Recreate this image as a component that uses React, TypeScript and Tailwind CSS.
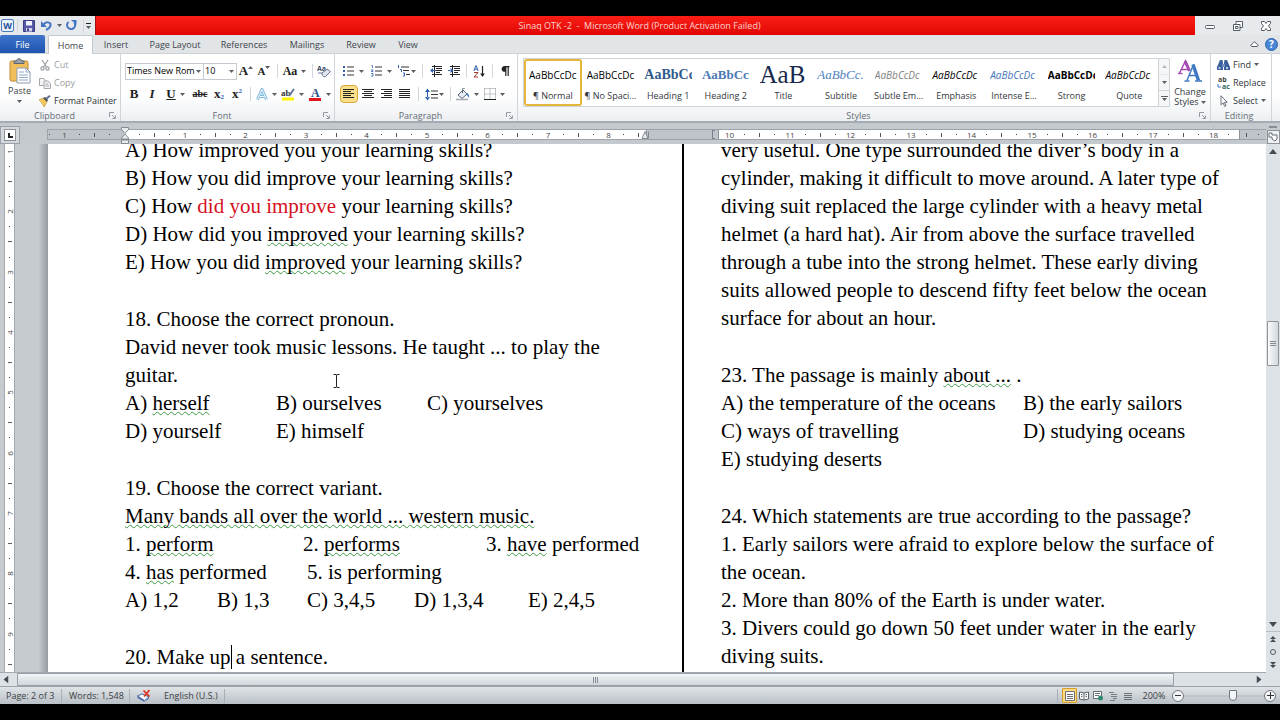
import { useState } from "react";
import type { ReactNode } from "react";
import clsx from "clsx";

const TABS = [
  { name: "Home", width: "w-[45px]" },
  { name: "Insert", width: "w-[46px]" },
  { name: "Page Layout", width: "w-[72px]" },
  { name: "References", width: "w-[66px]" },
  { name: "Mailings", width: "w-[60px]" },
  { name: "Review", width: "w-[48px]" },
  { name: "View", width: "w-[46px]" },
];

const STYLES = [
  { name: "¶ Normal", sample: "AaBbCcDc", look: "text-[10px] text-black" },
  { name: "¶ No Spaci...", sample: "AaBbCcDc", look: "text-[10px] text-black" },
  { name: "Heading 1", sample: "AaBbCc", look: "font-['Liberation_Serif',serif] text-[14px] font-bold text-[#2f5a8c]" },
  { name: "Heading 2", sample: "AaBbCc", look: "font-['Liberation_Serif',serif] text-[13px] font-bold text-[#4a7ab5]" },
  { name: "Title", sample: "AaB", look: "font-['Liberation_Serif',serif] text-[25px] text-[#17294d]" },
  { name: "Subtitle", sample: "AaBbCc.", look: "font-['Liberation_Serif',serif] text-[13px] italic text-[#4f81bd]" },
  { name: "Subtle Em...", sample: "AaBbCcDc", look: "text-[10px] italic text-[#808080]" },
  { name: "Emphasis", sample: "AaBbCcDc", look: "text-[10px] italic text-black" },
  { name: "Intense E...", sample: "AaBbCcDc", look: "text-[10px] italic text-[#3f74b8]" },
  { name: "Strong", sample: "AaBbCcDc", look: "text-[10px] font-bold text-black" },
  { name: "Quote", sample: "AaBbCcDc", look: "text-[10px] italic text-black" },
];

function Caret() {
  return (
    <svg viewBox="0 0 5 3" className="h-[3px] w-[5px] shrink-0">
      <path d="M0 0h5L2.500 3z" fill="#5a5f66" />
    </svg>
  );
}

function Sep({ className }: { className: string }) {
  return (
    <span className={clsx("flex h-[14px] shrink-0 justify-center", className)}>
      <span className="w-px bg-[#d3d7db]" />
    </span>
  );
}

function Tool({ label, className, caret, children }: { label: string; className: string; caret?: boolean; children: ReactNode }) {
  return (
    <button
      aria-label={label}
      className={clsx("flex h-[18px] shrink-0 items-center justify-center rounded-sm text-[#222] hover:bg-[#fdeeb3]", caret && "gap-[4px]", className)}
    >
      {children}
      {caret && <Caret />}
    </button>
  );
}

function Group({ name, launcher, className, children }: { name: string; launcher?: boolean; className: string; children: ReactNode }) {
  return (
    <section aria-label={name} className={clsx("flex flex-col border-r border-[#d0d5da]", className)}>
      <div className="flex min-h-0 flex-1">{children}</div>
      <div className="flex h-[11px] items-center pr-[4px] text-[#666c75]">
        <span className="flex-1 text-center">{name}</span>
        {launcher && (
          <button aria-label={`${name} options`}>
            <svg viewBox="0 0 7 7" className="h-[7px] w-[7px]" fill="none" stroke="#8a9098" strokeWidth="0.9">
              <path d="M.5 5V.5H5M3 3l3 3M6.400 3.500v3h-3" />
            </svg>
          </button>
        )}
      </div>
    </section>
  );
}

function Lines({ rows, className }: { rows: [number, number][]; className?: string }) {
  return (
    <svg viewBox="0 0 12 12" className={clsx("h-[12px] w-[12px]", className)} stroke="#222" strokeWidth="1">
      {rows.map(([from, to], i) => (
        <path key={i} d={`M${from} ${i * 2 + 1.5}H${to}`} />
      ))}
    </svg>
  );
}

/* ---------- ribbon groups ---------- */

function Clipboard() {
  return (
    <Group name="Clipboard" launcher className="w-[121px]">
      <button className="flex w-[39px] flex-col items-center justify-start pt-[4px] text-[#3b3f45]">
        <svg viewBox="0 0 24 26" className="h-[26px] w-[24px] shrink-0">
          <rect x="2" y="3" width="18" height="20" rx="1.500" fill="#f0bf5c" stroke="#c08b2c" />
          <path d="M6 5.500V3h2.500c0-3 5-3 5 0H16v2.500z" fill="#9aa2ab" stroke="#5d646c" />
          <path d="M9 10h9l4 4v11H9z" fill="#fff" stroke="#8c9bb0" />
          <path d="M18 10v4h4M11 14h5M11 17h9M11 19.500h9M11 22h9" stroke="#91a8c6" fill="none" />
        </svg>
        <span className="leading-[14px]">Paste</span>
        <span className="pt-[2px]"><Caret /></span>
      </button>
      <div className="flex flex-col gap-[1px] pt-[2px]">
        <button className="flex h-[17px] items-center gap-[3px] text-[#9a9da1]">
          <svg viewBox="0 0 12 12" className="h-[12px] w-[12px]" fill="none" stroke="#9a9da1" strokeWidth="1.200">
            <path d="M3 1l4.500 7M9 1L4.500 8" />
            <circle cx="3.500" cy="9.500" r="1.600" />
            <circle cx="8.500" cy="9.500" r="1.600" />
          </svg>
          Cut
        </button>
        <button className="flex h-[17px] items-center gap-[3px] text-[#9a9da1]">
          <svg viewBox="0 0 12 12" className="h-[12px] w-[12px]" fill="#f5f5f5" stroke="#a3a6aa">
            <path d="M.5 1.500h4l2 2v5h-6z" />
            <path d="M5 4h4l2.500 2.500v5H5zM6.500 7h3M6.500 9h3.500" />
          </svg>
          Copy
        </button>
        <button className="flex h-[17px] items-center gap-[3px] text-[#2b2f35]">
          <svg viewBox="0 0 12 12" className="h-[12px] w-[12px]">
            <path d="M0 5l4-2 4 4-3 5C4 9 2 7 0 5z" fill="#f3c95e" stroke="#b98e2d" strokeWidth=".6" />
            <path d="M4 3l2-1 3 3-1 2z" fill="#474d55" />
            <path d="M7.500 3.500L11 .8" stroke="#5a6f95" strokeWidth="2" />
          </svg>
          Format Painter
        </button>
      </div>
    </Group>
  );
}

function FontGroup() {
  return (
    <Group name="Font" launcher className="w-[214px]">
      <div className="flex flex-col gap-[5px] pt-[8px] pl-[4px]">
        <div className="flex h-[18px] items-center">
          <label className="relative flex h-[17px] w-[79px] items-center">
            <select aria-label="Font name" className="h-[17px] w-full appearance-none border border-[#c6cbd1] bg-white pl-px text-black">
              <option>Times New Rom</option>
              <option>Calibri</option>
            </select>
            <span className="pointer-events-none absolute right-[3px]"><Caret /></span>
          </label>
          <label className="relative flex h-[17px] w-[33px] items-center">
            <select aria-label="Font size" className="h-[17px] w-full appearance-none border border-l-0 border-[#c6cbd1] bg-white pl-px text-black">
              <option>10</option>
              <option>12</option>
            </select>
            <span className="pointer-events-none absolute right-[3px]"><Caret /></span>
          </label>
          <Tool label="Grow font" className="w-[18px] font-['Liberation_Serif',serif] text-[13px] font-bold">
            A<span className="mb-[8px] rotate-180"><Caret /></span>
          </Tool>
          <Tool label="Shrink font" className="w-[18px] font-['Liberation_Serif',serif] text-[11px] font-bold">
            A<span className="mb-[8px]"><Caret /></span>
          </Tool>
          <Sep className="w-[8px]" />
          <Tool label="Change case" caret className="w-[27px] font-['Liberation_Serif',serif] text-[12px] font-bold">Aa</Tool>
          <Sep className="w-[8px]" />
          <Tool label="Clear formatting" className="w-[16px]">
            <svg viewBox="0 0 14 14" className="h-[14px] w-[14px]">
              <text x="0" y="7" fontSize="7" fontWeight="bold" fill="#3c4a66">Aa</text>
              <path d="M1 9h5" stroke="#6a7fa8" />
              <path d="M5 9l5-4 3.500 2.500-5 5c-2 1-4-1-3.500-3.500z" fill="#dfe4ee" stroke="#68748c" />
            </svg>
          </Tool>
        </div>
        <div className="flex h-[18px] items-center font-['Liberation_Serif',serif] text-[13px]">
          <Tool label="Bold" className="w-[18px] font-bold">B</Tool>
          <Tool label="Italic" className="w-[18px] font-bold italic">I</Tool>
          <Tool label="Underline" caret className="w-[29px]"><span className="font-bold underline">U</span></Tool>
          <Tool label="Strikethrough" className="w-[20px] text-[10px] font-bold line-through">abc</Tool>
          <Tool label="Subscript" className="w-[18px] font-bold">x<span className="mt-[6px] text-[7px] text-[#2d5cb4]">2</span></Tool>
          <Tool label="Superscript" className="w-[18px] font-bold">x<span className="mb-[6px] text-[7px] text-[#2d5cb4]">2</span></Tool>
          <Sep className="w-[8px]" />
          <Tool label="Text effects" caret className="w-[25px]">
            <svg viewBox="0 0 12 13" className="h-[13px] w-[12px]" fill="none" strokeLinejoin="round">
              <path d="M1.500 11.500L6 1.500l4.500 10M3.500 8.500h5" stroke="#7fb9e0" strokeWidth="3" />
              <path d="M1.500 11.500L6 1.500l4.500 10M3.500 8.500h5" stroke="#f4fbff" strokeWidth="1" />
            </svg>
          </Tool>
          <Tool label="Highlight colour" caret className="w-[27px]">
            <svg viewBox="0 0 14 14" className="h-[14px] w-[14px]">
              <text x="0" y="9" fontSize="9" fontWeight="bold" fill="#333">ab</text>
              <path d="M8 9l5-7" stroke="#66779a" strokeWidth="2" />
              <path d="M1 10.500h12v3H1z" fill="#fff200" />
            </svg>
          </Tool>
          <Tool label="Font colour" caret className="w-[27px]">
            <svg viewBox="0 0 14 14" className="h-[14px] w-[14px] overflow-visible">
              <text x="3" y="10" fontSize="12" fontWeight="bold" fill="#2d4f88">A</text>
              <path d="M1 11h12v3H1z" fill="#e3131b" />
            </svg>
          </Tool>
        </div>
      </div>
    </Group>
  );
}

function IndentIcon({ flip }: { flip?: boolean }) {
  return (
    <svg viewBox="0 0 13 12" className="h-[12px] w-[13px]">
      <path d="M2 1.500h10M6 3.500h6M6 5.500h6M6 7.500h4M2 9.500h10M4.500 0v12" stroke="#222" />
      <path d={flip ? "M5.500 5.500L2.500 3v5zM0 5h3v1H0z" : "M0 5.500L3 3v5zM3 5h3v1H3z"} fill="#2f5fb3" />
    </svg>
  );
}

function Paragraph() {
  return (
    <Group name="Paragraph" launcher className="w-[183px]">
      <div className="flex flex-col gap-[5px] pt-[8px] pl-[5px]">
        <div className="flex h-[18px] items-center">
          <Tool label="Bullets" caret className="w-[27px]">
            <svg viewBox="0 0 12 12" className="h-[12px] w-[12px]">
              <path d="M4 2h7M4 6h7M4 10h7" stroke="#333" />
              <path d="M0 1h2v2H0zM0 5h2v2H0zM0 9h2v2H0z" fill="#2f5fb3" />
            </svg>
          </Tool>
          <Tool label="Numbering" caret className="w-[28px]">
            <svg viewBox="0 0 12 12" className="h-[12px] w-[12px]">
              <path d="M4 2h7M4 6h7M4 10h7" stroke="#333" />
              <path d="M.5 .5h1V3M0 5h2v1.500H0M0 8.500h2v2.500H0" stroke="#2f5fb3" strokeWidth=".8" fill="none" />
            </svg>
          </Tool>
          <Tool label="Multilevel list" className="w-[23px]">
            <svg viewBox="0 0 14 12" className="h-[12px] w-[14px]">
              <path d="M4 2h8M6 5.500h6M9 9.500h4" stroke="#333" />
              <path d="M1.500 0v3M3 4.500h1.500V7M6 8h1.500v3H6" stroke="#2f5fb3" fill="none" />
            </svg>
            <Caret />
          </Tool>
          <Sep className="w-[9px]" />
          <Tool label="Decrease indent" className="w-[18px]"><IndentIcon /></Tool>
          <Tool label="Increase indent" className="w-[18px]"><IndentIcon flip /></Tool>
          <Sep className="w-[7px]" />
          <Tool label="Sort" className="w-[18px]">
            <svg viewBox="0 0 12 13" className="h-[13px] w-[12px]" fill="none">
              <path d="M.8 6L3 .5 5.200 6M1.500 4.200h3" stroke="#2f5fb3" />
              <path d="M1 7.500h4l-4 4.500h4" stroke="#a03a2e" />
              <path d="M9.500 1v10" stroke="#222" strokeWidth="1.200" />
              <path d="M7.200 8.500h4.600L9.500 12z" fill="#222" />
            </svg>
          </Tool>
          <Sep className="w-[8px]" />
          <Tool label="Show marks" className="w-[18px]">
            <svg viewBox="0 0 9 11" className="h-[11px] w-[9px]">
              <path d="M8.500 0v1.200H7.800V10H6.600V1.200H5.400V10H4.200V5.800C-.5 6-.5 0 3.800 0z" fill="#222" />
            </svg>
          </Tool>
        </div>
        <div className="flex h-[18px] items-center">
          <Tool label="Align left" className="w-[18px] border border-[#d9a93c] bg-[#fbe08a]">
            <Lines rows={[[0, 11], [0, 8], [0, 11], [0, 8], [0, 11]]} />
          </Tool>
          <Tool label="Centre" className="w-[19px]"><Lines rows={[[0, 12], [2, 10], [0, 12], [2, 10], [0, 12]]} /></Tool>
          <Tool label="Align right" className="w-[19px]"><Lines rows={[[0, 11], [3, 11], [0, 11], [3, 11], [0, 11]]} /></Tool>
          <Tool label="Justify" className="w-[18px]"><Lines rows={[[0, 11], [0, 11], [0, 11], [0, 11], [0, 11]]} /></Tool>
          <Sep className="w-[8px]" />
          <Tool label="Line spacing" className="w-[24px]">
            <svg viewBox="0 0 14 13" className="h-[13px] w-[14px]">
              <path d="M6 3h7M6 6.500h7M6 10h7" stroke="#333" />
              <path d="M0 4L2.500.5 5 4zM0 9l2.500 3.500L5 9zM2 3.500h1v6H2z" fill="#2f5fb3" />
            </svg>
            <Caret />
          </Tool>
          <Sep className="w-[8px]" />
          <Tool label="Shading" caret className="w-[27px]">
            <svg viewBox="0 0 14 13" className="h-[13px] w-[14px]">
              <path d="M2 7l5-5 4 4-5 4.500z" fill="#e8edf3" stroke="#5a6778" />
              <path d="M6.500 5V1c0-1 2-1 2 0" fill="none" stroke="#5a6778" />
              <path d="M11 5c2 1 2.500 3 2 5-1-1-1-3-3-3z" fill="#3f76c1" />
              <path d="M0 11.500h12" stroke="#a7adb4" strokeWidth="1.500" />
            </svg>
          </Tool>
          <Tool label="Borders" caret className="w-[27px]">
            <svg viewBox="0 0 12 12" className="h-[12px] w-[12px]" fill="none">
              <path d="M.5.500v11M6 .5v11M11.500.500v11M.5.500h11M.5 6h11" stroke="#8b9199" strokeDasharray="1 1" />
              <path d="M0 11.500h12" stroke="#222" />
            </svg>
          </Tool>
        </div>
      </div>
    </Group>
  );
}

function StylesGroup() {
  const [current, setCurrent] = useState("¶ Normal");
  return (
    <Group name="Styles" launcher className="min-w-0 flex-1">
      <div className="mt-[4px] ml-[5px] flex h-[49px] min-w-0 flex-1 border border-[#cfd4d9] bg-white">
        {STYLES.map((s) => (
          <button
            key={s.name}
            onClick={() => setCurrent(s.name)}
            className={clsx(
              "flex min-w-0 flex-1 flex-col items-center border-2 px-[3px]",
              current === s.name ? "rounded-[3px] border-[#e5b63c]" : "border-transparent"
            )}
          >
            <span className={clsx("flex h-[28px] w-full items-center overflow-hidden whitespace-nowrap", s.look)}>{s.sample}</span>
            <span className="leading-[14px] whitespace-nowrap text-[#33373d]">{s.name}</span>
          </button>
        ))}
        <div className="flex w-[11px] flex-col divide-y divide-[#cfd4d9] border-l border-[#cfd4d9] bg-[#f4f6f8]">
          <button aria-label="Row up" className="flex flex-1 items-center justify-center opacity-40"><span className="rotate-180"><Caret /></span></button>
          <button aria-label="Row down" className="flex flex-1 items-center justify-center"><Caret /></button>
          <button aria-label="More styles" className="flex flex-1 flex-col items-center justify-center gap-px">
            <span className="h-px w-[7px] bg-[#5a5f66]" />
            <Caret />
          </button>
        </div>
      </div>
      <button className="flex w-[40px] flex-col items-center justify-start pt-[5px] leading-[10px] text-[#33373d]">
        <svg viewBox="0 0 24 24" className="mb-[4px] h-[24px] w-[24px] shrink-0" fill="none">
          <path d="M1.500 14L7.500 2l3 6" stroke="#a44bb4" strokeWidth="1.500" />
          <path d="M7 2l4.500 10" stroke="#a44bb4" strokeWidth="3" />
          <path d="M3.500 10.500H10M0 14.500h4.500" stroke="#a44bb4" strokeWidth="1.300" />
          <path d="M9 21.500L15.500 5.500" stroke="#3f78c3" strokeWidth="1.500" />
          <path d="M15 5.500l5.500 16" stroke="#3f78c3" strokeWidth="3.500" />
          <path d="M11 16.500h8M6.500 22h5M17 22h7" stroke="#3f78c3" strokeWidth="1.400" />
        </svg>
        <span>Change</span>
        <span className="flex items-center gap-[2px]">Styles <Caret /></span>
      </button>
    </Group>
  );
}

function Editing() {
  return (
    <Group name="Editing" className="mr-[8px] w-[61px]">
      <div className="flex flex-col gap-[1px] pt-[2px] pl-[6px] text-[#33373d]">
        <button className="flex h-[17px] items-center gap-[3px]">
          <svg viewBox="0 0 13 12" className="h-[12px] w-[13px]" fill="#3d5f9c">
            <path d="M3 1h2.500l.5 3v7H0V8zM7.500 1H10l3 7v3H7V4z" />
            <path d="M5 5h3v3H5z" fill="#6f8fc4" />
            <path d="M1.500 8h2v2h-2zM9 8h2v2H9z" fill="#b9cbe8" />
          </svg>
          Find <Caret />
        </button>
        <button className="flex h-[17px] items-center gap-[3px]">
          <svg viewBox="0 0 13 12" className="h-[12px] w-[13px] overflow-visible" fontWeight="bold">
            <text x="1" y="5" fontSize="7" fill="#444">ab</text>
            <text x="5" y="12" fontSize="7" fill="#2f6a5a">ac</text>
            <path d="M1 7v3h3" stroke="#3f76c1" fill="none" />
          </svg>
          Replace
        </button>
        <button className="flex h-[17px] items-center gap-[3px]">
          <svg viewBox="0 0 13 12" className="h-[12px] w-[13px]">
            <path d="M4 .8v9l2-2 1.600 3.500 1.400-.7-1.600-3.300h2.800z" fill="#fff" stroke="#596273" strokeWidth=".9" />
          </svg>
          Select <Caret />
        </button>
      </div>
    </Group>
  );
}

/* ---------- rulers ---------- */

// one mark per quarter inch: number, dot, half-inch tick, dot
function markAt(quarter: number) {
  const q = ((quarter % 4) + 4) % 4;
  if (q === 0) return String(Math.abs(quarter / 4));
  return q === 2 ? "tick" : "dot";
}

function Marks({ from, count, vertical }: { from: number; count: number; vertical?: boolean }) {
  return (
    <>
      {Array.from({ length: count }, (_, i) => {
        const mark = markAt(from + i);
        return (
          <span key={i} className={clsx("flex min-h-0 min-w-0 flex-1 items-center justify-center", vertical && "-rotate-90")}>
            {mark === "dot" && <span className="h-px w-px bg-[#444]" />}
            {mark === "tick" && <span className="h-[4px] w-px bg-[#555]" />}
            {mark !== "dot" && mark !== "tick" && <span className="text-[8px] leading-[9px] text-[#444]">{mark}</span>}
          </span>
        );
      })}
    </>
  );
}

function Ruler() {
  return (
    <div className="flex h-[21px] bg-[#c4c9ce]">
      <button aria-label="Tab selector" className="mt-[3px] flex h-[18px] w-[20px] items-center justify-center border border-[#9ba1a8] bg-[#d4d8dc]">
        <span className="flex h-[12px] w-[12px] items-center justify-center border border-[#8d9399] bg-white">
          <span className="h-[5px] w-[5px] border-b-2 border-l-2 border-[#222]" />
        </span>
      </button>
      <div className="relative mt-[6px] ml-[27px] flex h-[11px] min-w-0 flex-1 border border-r-0 border-[#9da3aa] bg-[#bfc4ca]">
        <div className="flex w-[76px] shrink-0 justify-end overflow-hidden pr-[7px]">
          <span className="flex w-[75px] shrink-0"><Marks from={-5} count={5} /></span>
        </div>
        <div className="flex w-[522px] shrink-0 bg-white pl-[8px]"><Marks from={1} count={34} /></div>
        <div className="flex w-[73px] shrink-0 justify-end border-x border-[#8d9399]">
          <span className="mr-[3px] w-[3px] border-y border-l border-[#7a8087]" />
        </div>
        <div className="flex w-[520px] shrink-0 bg-white px-[3px]"><Marks from={40} count={34} /></div>
        <div className="flex min-w-0 flex-1 border-l border-[#8d9399]">
          <span className="flex w-[26px] shrink-0 pr-[2px]"><Marks from={74} count={2} /></span>
        </div>
        <svg viewBox="0 0 8 17" className="absolute -top-[3px] left-[73px] h-[17px] w-[8px]" fill="#e9ecef" stroke="#7a8087" strokeWidth=".9">
          <path d="M.5.500h7v2L4 6.500.5 2.500zM4 7l3.500 4v1h-7v-1zM.5 13h7v3.500h-7z" />
        </svg>
        <svg viewBox="0 0 8 8" className="absolute top-px left-[593px] h-[8px] w-[8px]" fill="#e9ecef" stroke="#7a8087" strokeWidth=".9">
          <path d="M1 7.500L4 .5l3 7zM7.500.500v7" />
        </svg>
      </div>
    </div>
  );
}

function VerticalRuler() {
  return (
    <div className="flex w-[48px] shrink-0 bg-linear-to-r from-[#c6cbd0] from-80% to-[#969ba1] pl-[4px]">
      <div className="flex h-full w-[11px] flex-col border-x border-[#a2a8ae] bg-white">
        <Marks from={4} count={35} vertical />
      </div>
    </div>
  );
}

/* ---------- document ---------- */

function Wavy({ children }: { children: ReactNode }) {
  return (
    <span className="underline decoration-[#3c9a44] decoration-wavy decoration-1 underline-offset-1 [text-decoration-skip-ink:none]">
      {children}
    </span>
  );
}

function Blank() {
  return <div className="h-[29px]" />;
}

function Stop({ className, children }: { className?: string; children: ReactNode }) {
  return <span className={clsx("inline-block", className)}>{children}</span>;
}

function LeftColumn() {
  return (
    <div className="-mt-[8px] w-[557px] shrink-0">
      <p>A) How improved you your learning skills?</p>
      <p>B) How you did improve your learning skills?</p>
      <p>C) How <span className="text-[#d5121f]">did you improve</span> your learning skills?</p>
      <p>D) How did you <Wavy>improved</Wavy> your learning skills?</p>
      <p>E) How you did <Wavy>improved</Wavy> your learning skills?</p>
      <Blank />
      <p>18. Choose the correct pronoun.</p>
      <p>David never took music lessons. He taught ... to play the</p>
      <p>guitar.</p>
      <p><Stop className="w-[151px]">A) <Wavy>herself</Wavy></Stop><Stop className="w-[151px]">B) ourselves</Stop><Stop>C) yourselves</Stop></p>
      <p><Stop className="w-[151px]">D) yourself</Stop><Stop>E) himself</Stop></p>
      <Blank />
      <p>19. Choose the correct variant.</p>
      <p><Wavy>Many bands all over the world ... western music.</Wavy></p>
      <p><Stop className="w-[178px]">1. <Wavy>perform</Wavy></Stop><Stop className="w-[183px]">2. <Wavy>performs</Wavy></Stop><Stop>3. <Wavy>have</Wavy> performed</Stop></p>
      <p><Stop className="w-[182px]">4. <Wavy>has</Wavy> performed</Stop><Stop>5. is performing</Stop></p>
      <p>
        <Stop className="w-[92px]">A) 1,2</Stop><Stop className="w-[90px]">B) 1,3</Stop><Stop className="w-[107px]">C) 3,4,5</Stop>
        <Stop className="w-[114px]">D) 1,3,4</Stop><Stop>E) 2,4,5</Stop>
      </p>
      <Blank />
      <p>20. Make up<span className="-mr-px border-l border-black" /> a sentence.</p>
    </div>
  );
}

function RightColumn() {
  return (
    <div className="-mt-[8px]">
      <p>very useful. One type surrounded the diver’s body in a</p>
      <p>cylinder, making it difficult to move around. A later type of</p>
      <p>diving suit replaced the large cylinder with a heavy metal</p>
      <p>helmet (a hard hat). Air from above the surface travelled</p>
      <p>through a tube into the strong helmet. These early diving</p>
      <p>suits allowed people to descend fifty feet below the ocean</p>
      <p>surface for about an hour.</p>
      <Blank />
      <p>23. The passage is mainly <Wavy>about ...</Wavy> .</p>
      <p><Stop className="w-[302px]">A) the temperature of the oceans</Stop><Stop>B) the early sailors</Stop></p>
      <p><Stop className="w-[302px]">C) ways of travelling</Stop><Stop>D) studying oceans</Stop></p>
      <p>E) studying deserts</p>
      <Blank />
      <p>24. Which statements are true according to the passage?</p>
      <p>1. Early sailors were afraid to explore below the surface of</p>
      <p>the ocean.</p>
      <p>2. More than 80% of the Earth is under water.</p>
      <p>3. Divers could go down 50 feet under water in the early</p>
      <p>diving suits.</p>
    </div>
  );
}

function Arrow({ turn }: { turn?: string }) {
  return (
    <svg viewBox="0 0 8 5" className={clsx("h-[5px] w-[8px]", turn)}>
      <path d="M0 5L4 0l4 5z" fill="#454b55" />
    </svg>
  );
}

function VerticalScroll() {
  return (
    <div className="flex w-[14px] shrink-0 flex-col items-center bg-[#dde2e6]">
      <div className="flex h-[21px] w-full flex-col items-center gap-[2px] bg-[#c4c9ce] pt-[3px]">
        <span className="h-[2px] w-[8px] bg-[#858b92]" />
        <button aria-label="View ruler" className="flex h-[14px] w-[13px] items-center justify-center border border-[#8d9399] bg-[#eef0f2]">
          <svg viewBox="0 0 10 10" className="h-[10px] w-[10px]" fill="#fff" stroke="#666d75">
            <path d="M1 1h3v2h5v4L7 9 4 7V5H1z" />
          </svg>
        </button>
      </div>
      <button aria-label="Scroll up" className="flex h-[15px] items-center"><Arrow /></button>
      <div className="flex w-full grow-[162] basis-0" />
      <div className="flex h-[45px] w-[12px] flex-col items-center justify-center gap-px rounded-[1px] border border-[#8f959c] bg-linear-to-r from-[#fafbfc] to-[#d3d8dd]">
        <span className="h-px w-[6px] bg-[#868c93]" />
        <span className="h-px w-[6px] bg-[#868c93]" />
        <span className="h-px w-[6px] bg-[#868c93]" />
      </div>
      <div className="flex w-full grow-[252] basis-0" />
      <button aria-label="Scroll down" className="flex h-[13px] items-center"><Arrow turn="rotate-180" /></button>
      <button aria-label="Previous page" className="flex h-[14px] w-full flex-col items-center justify-center border-t border-[#b9bfc5]">
        <svg viewBox="0 0 6 6" className="h-[6px] w-[6px]" fill="#454b55"><path d="M0 3l3-3 3 3zM0 6l3-3 3 3z" /></svg>
      </button>
      <button aria-label="Browse object" className="flex h-[13px] items-center">
        <span className="h-[6px] w-[6px] rounded-full border border-[#555b63]" />
      </button>
      <button aria-label="Next page" className="flex h-[14px] items-center">
        <svg viewBox="0 0 6 6" className="h-[6px] w-[6px]" fill="#454b55"><path d="M0 0l3 3 3-3zM0 3l3 3 3-3z" /></svg>
      </button>
      <div className="h-[14px]" />
    </div>
  );
}

function HorizontalScroll() {
  return (
    <div className="flex h-[14px] items-center border-t border-[#a3a9b0] bg-[#dde2e6]">
      <button aria-label="Scroll left" className="flex w-[17px] justify-start pl-[2px]"><Arrow turn="-rotate-90" /></button>
      <div className="flex h-[13px] grow-[1157] basis-0 items-center justify-center gap-px border border-[#9aa0a7] bg-linear-to-b from-[#f4f6f7] to-[#d0d6db]">
        <span className="h-[6px] w-px bg-[#868c93]" />
        <span className="h-[6px] w-px bg-[#868c93]" />
        <span className="h-[6px] w-px bg-[#868c93]" />
      </div>
      <div className="flex grow-[78] basis-0" />
      <button aria-label="Scroll right" className="flex w-[14px] justify-center"><Arrow turn="rotate-90" /></button>
    </div>
  );
}

function StatusSep({ className }: { className?: string }) {
  return <span className={clsx("h-[14px] w-px bg-[#a9afb6]", className)} />;
}

function StatusBar() {
  const [zoom, setZoom] = useState(62);
  return (
    <footer className="flex h-[18px] items-center border-t border-[#9da3aa] bg-linear-to-b from-[#e0e4e7] to-[#b9c0c6] text-[#3b3f45]">
      <button className="w-[56px] pl-[6px] text-left whitespace-nowrap">Page: 2 of 3</button>
      <StatusSep className="ml-[5px]" />
      <button className="w-[67px] pl-[7px] text-left whitespace-nowrap">Words: 1,548</button>
      <StatusSep />
      <button aria-label="Proofing errors" className="ml-[7px]">
        <svg viewBox="0 0 14 13" className="h-[13px] w-[14px]">
          <path d="M.5 7L5 5l7 3-4.500 3.500z" fill="#fff" stroke="#4a6da7" />
          <path d="M.5 7v2l7 4v-1.500zM7.500 13L12 9.500V8" fill="#4a6da7" />
          <path d="M6.500 1.500l6 6M12.500 1L7 7.500" stroke="#e0331f" strokeWidth="1.700" />
        </svg>
      </button>
      <button className="ml-[13px] w-[60px] text-left whitespace-nowrap">English (U.S.)</button>
      <StatusSep />
      <div className="flex-1" />
      <StatusSep className="mr-[4px]" />
      <button aria-label="Print layout" className="flex h-[15px] w-[15px] items-center justify-center rounded-[1px] border border-[#d49c2e] bg-[#fbdb7b]">
        <svg viewBox="0 0 10 10" className="h-[10px] w-[10px]"><path d="M.5.500h9v9h-9z" fill="#fff" stroke="#6b6f75" /><path d="M2 3.500h6M2 5.500h6M2 7.500h6" stroke="#6b6f75" /></svg>
      </button>
      <button aria-label="Full screen reading" className="flex w-[14px] justify-center">
        <svg viewBox="0 0 10 10" className="h-[10px] w-[10px]" fill="#fff" stroke="#5a6068"><path d="M5 2L.5 1v7L5 9l4.500-1V1zM5 2v7M2 3.500l1.500.3M2 5.500l1.500.3M8 3.500l-1.500.3M8 5.500l-1.500.3" /></svg>
      </button>
      <button aria-label="Web layout" className="flex w-[14px] justify-center">
        <svg viewBox="0 0 10 10" className="h-[10px] w-[10px]"><path d="M.5.500h8v7h-8z" fill="#fff" stroke="#6b6f75" /><path d="M2 2.500h5M2 4.500h4" stroke="#6b6f75" /><circle cx="7.500" cy="7" r="2.500" fill="#2f8a72" /></svg>
      </button>
      <button aria-label="Outline" className="flex w-[15px] justify-center">
        <svg viewBox="0 0 10 10" className="h-[10px] w-[10px]" stroke="#787e86"><path d="M1 1.500h5M3 3.500h6M3 5.500h6M5 7.500h4M2 9.500h5" /></svg>
      </button>
      <button aria-label="Draft" className="flex w-[15px] justify-center">
        <svg viewBox="0 0 10 10" className="h-[10px] w-[10px]" stroke="#6b7179"><path d="M1 2.500h8M1 4.500h8M1 6.500h8M1 8.500h8" /></svg>
      </button>
      <button className="mr-[3px] ml-[4px] w-[30px] text-center">200%</button>
      <button aria-label="Zoom out" className="flex h-[12px] w-[12px] items-center justify-center rounded-full border border-[#71777f] bg-[#f3f5f6]">
        <span className="h-px w-[6px] bg-[#333]" />
      </button>
      <input
        type="range"
        aria-label="Zoom"
        value={zoom}
        onChange={(e) => setZoom(Number(e.target.value))}
        className="h-[12px] w-[80px] appearance-none bg-linear-to-b from-transparent from-45% via-[#868c93] via-50% to-transparent to-55% [&::-webkit-slider-thumb]:h-[11px] [&::-webkit-slider-thumb]:w-[8px] [&::-webkit-slider-thumb]:appearance-none [&::-webkit-slider-thumb]:rounded-b-[4px] [&::-webkit-slider-thumb]:border [&::-webkit-slider-thumb]:border-[#71777f] [&::-webkit-slider-thumb]:bg-[#f3f5f6]"
      />
      <button aria-label="Zoom in" className="mr-[4px] flex h-[12px] w-[12px] items-center justify-center rounded-full border border-[#71777f] bg-[#f3f5f6]">
        <svg viewBox="0 0 7 7" className="h-[7px] w-[7px]" stroke="#333"><path d="M0 3.500h7M3.500 0v7" /></svg>
      </button>
    </footer>
  );
}

function TitleBar() {
  return (
    <header className="flex h-[19px] bg-[#e6eaec]">
      <div className="flex w-[95px] items-center">
        <span className="ml-[1px] flex h-[13px] w-[13px] shrink-0 items-center justify-center rounded-[2px] border border-[#4c79b8] bg-[#e8f1fb] text-[9px] font-bold text-[#1f4f96]">W</span>
        <Sep className="w-[7px]" />
        <button aria-label="Save" className="flex w-[16px] justify-center">
          <svg viewBox="0 0 12 12" className="h-[12px] w-[12px]"><path d="M.5.500h11v11h-11z" fill="#5658a8" stroke="#3b3d84" /><path d="M3 1h6v4.500H3z" fill="#f2f4fb" /><path d="M3 8h6v3.500H3z" fill="#d4d7ee" /><path d="M4 8.500h2v2.500H4z" fill="#3b3d84" /></svg>
        </button>
        <button aria-label="Undo" className="ml-[2px] flex w-[25px] items-center justify-center gap-[5px]">
          <svg viewBox="0 0 11 11" className="h-[11px] w-[11px]" fill="none"><path d="M2.500 4.500C5 1 10 2 9.500 5.500 9 8 7 9 5 10" stroke="#4674c4" strokeWidth="2" /><path d="M0 1v6h6z" fill="#4674c4" /></svg>
          <Caret />
        </button>
        <button aria-label="Redo" className="flex w-[14px] justify-center">
          <svg viewBox="0 0 11 11" className="h-[11px] w-[11px]" fill="none"><path d="M2.500 2A4 4 0 1 0 8.500 3" stroke="#4674c4" strokeWidth="2" /><path d="M5 0h5.500v5z" fill="#4674c4" /></svg>
        </button>
        <Sep className="ml-[2px] w-[6px]" />
        <button aria-label="Customise toolbar" className="flex flex-col items-center gap-[2px]"><span className="h-px w-[5px] bg-[#222]" /><Caret /></button>
      </div>
      <h1 className="flex flex-1 items-center justify-center border-l border-[#a01010] bg-linear-to-b from-[#fb1d16] to-[#e00502] pr-[12px] whitespace-pre text-[#f9d3cf]">Sinaq OTK -2  -  Microsoft Word (Product Activation Failed)</h1>
      <div className="flex w-[85px] items-center justify-between pr-[9px] pl-[10px]">
        <button aria-label="Minimise">
          <svg viewBox="0 0 10 10" className="h-[10px] w-[10px]" fill="#fff" stroke="#565c64"><rect x=".5" y="4.500" width="9" height="3" rx="1" /></svg>
        </button>
        <button aria-label="Restore">
          <svg viewBox="0 0 10 10" className="h-[10px] w-[10px]" fill="#fff" stroke="#565c64"><path d="M3 .5h6.500v6H3z" /><path d="M.5 3.500H7v6H.5zM2.500 5.500h2.500v2H2.500z" /></svg>
        </button>
        <button aria-label="Close">
          <svg viewBox="0 0 10 10" className="h-[10px] w-[10px]" fill="#fff" stroke="#565c64"><path d="M.5.500H3.500L5 2.500 6.500.500h3v2L7.500 5l2 2.500v2h-3L5 7.500 3.500 9.500h-3v-2l2-2.500-2-2.500z" /></svg>
        </button>
      </div>
    </header>
  );
}

export default function App() {
  const [tab, setTab] = useState("Home");

  return (
    <div className="flex h-screen flex-col overflow-hidden bg-black py-[16px] font-['Open_Sans','Noto_Sans',sans-serif] text-[9px] leading-[12px]">
      <TitleBar />

      {/* Tabs */}
      <nav className="flex h-[19px] items-stretch border-b border-[#cdd2d6] bg-[#e1e5e7] text-[#3f444b]">
        <button className="mr-[3px] w-[45px] rounded-t-[2px] bg-linear-to-b from-[#3f74cb] to-[#1f54ae] pt-[2px] text-white">File</button>
        {TABS.map((t) => (
          <button
            key={t.name}
            onClick={() => setTab(t.name)}
            className={clsx(t.width, "shrink-0 pt-[2px] whitespace-nowrap", tab === t.name && "-mb-px rounded-t-[2px] border border-b-0 border-[#c3c9ce] bg-white")}
          >
            {t.name}
          </button>
        ))}
        <div className="flex-1" />
        <button aria-label="Collapse ribbon" className="mr-[6px]">
          <svg viewBox="0 0 9 6" className="h-[6px] w-[9px]" fill="#fff" stroke="#565c64"><path d="M.7 4.500L4.500.700l3.800 3.800L7 5.500h-5z" /></svg>
        </button>
        <button aria-label="Help" className="mr-[2px] flex h-[13px] w-[13px] items-center justify-center self-center rounded-full border border-[#2d62ae] bg-[#4a86d4] text-[10px] font-bold text-white">?</button>
      </nav>

      {/* Ribbon */}
      <div className="flex h-[69px] border-b-2 border-[#a5abb2] bg-linear-to-b from-white from-60% to-[#eceff2]">
        <Clipboard />
        <FontGroup />
        <Paragraph />
        <StylesGroup />
        <Editing />
      </div>

      <div className="flex min-h-0 flex-1">
        <div className="flex min-w-0 flex-1 flex-col">
          <Ruler />
          <main className="flex min-h-0 flex-1 overflow-hidden">
            <VerticalRuler />
            <article className="relative flex min-w-0 flex-1 overflow-hidden bg-white pl-[77px] font-['Liberation_Serif','Times_New_Roman',serif] text-[21px] leading-[28px] whitespace-nowrap text-black">
              <LeftColumn />
              <div className="mr-[37px] w-[2px] shrink-0 bg-black" />
              <RightColumn />
              <svg viewBox="0 0 7 14" className="absolute top-[230px] left-[285px] h-[14px] w-[7px]" fill="none" stroke="#222">
                <path d="M.5.500H3l.5.500.5-.5h2.500M3.500 1v12M.5 13.500H3l.5-.5.5.5h2.500" />
              </svg>
            </article>
          </main>
          <HorizontalScroll />
        </div>
        <VerticalScroll />
      </div>

      <StatusBar />
    </div>
  );
}
